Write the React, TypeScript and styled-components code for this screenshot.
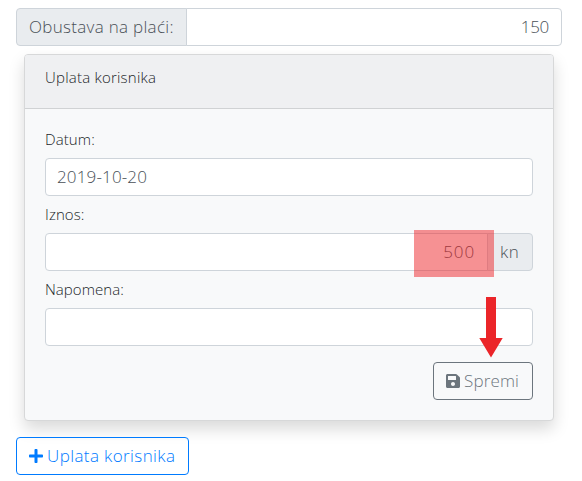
import React from "react";
import styled, { createGlobalStyle } from "styled-components";
import { FaPlus, FaSave } from "react-icons/fa";

const GlobalStyle = createGlobalStyle`
  *, *::before, *::after { box-sizing: border-box; }
  body {
    margin: 0;
    background: #fff;
    color: #212529;
    font-family: "Open Sans", "Noto Sans", sans-serif;
    font-weight: 340;
    font-size: 17px;
    line-height: 24px;
  }
`;

const Page = styled.main`
  padding: 8px 20px 6px 16px;
  height: 481px;
  overflow: hidden;
`;

const InputGroup = styled.div`
  display: flex;
  position: relative;
  height: 38px;
`;

const Addon = styled.span<{ $side: "left" | "right"; $width: number; $tracking?: number }>`
  flex: none;
  width: ${(p) => p.$width}px;
  padding: 6px 0 6px 12px;
  white-space: nowrap;
  color: #495057;
  background: #e9ecef;
  border: 1px solid #ced4da;
  letter-spacing: ${(p) => p.$tracking ?? 0}px;
  border-radius: ${(p) => (p.$side === "left" ? "4px 0 0 4px" : "0 4px 4px 0")};
  ${(p) => (p.$side === "left" ? "margin-right: -1px;" : "margin-left: -1px;")}
`;

const Input = styled.input<{ $join?: "left" | "right"; $end?: boolean; $tracking?: number }>`
  display: block;
  flex: 1;
  min-width: 0;
  width: 100%;
  height: 38px;
  padding: 5px 12px 7px 11px;
  font: inherit;
  letter-spacing: ${(p) => p.$tracking ?? 0}px;
  color: #495057;
  text-align: ${(p) => (p.$end ? "right" : "left")};
  background: #fff;
  border: 1px solid #ced4da;
  border-radius: ${(p) =>
    p.$join === "left" ? "0 4px 4px 0" : p.$join === "right" ? "4px 0 0 4px" : "4px"};
  outline: none;
`;

const Card = styled.section`
  margin: 8px 8px 16px;
  height: 367px;
  background: #f8f9fa;
  border: 1px solid #d7d8d9;
  border-radius: 4px;
  box-shadow: 0 8px 16px rgba(0, 0, 0, 0.15);
`;

const CardHeader = styled.header`
  height: 54px;
  padding: 10px 20px;
  background: #eff0f2;
  border-bottom: 1px solid #d0d2d4;
  border-radius: 3px 3px 0 0;
  font-size: 15px;
  letter-spacing: 0.22px;
`;

const CardBody = styled.div`
  padding: 20px;
`;

const Label = styled.label<{ $tracking?: number }>`
  display: block;
  height: 29px;
  line-height: 20px;
  font-size: 15px;
  letter-spacing: ${(p) => p.$tracking ?? 0}px;
`;

const Field = styled.div`
  margin-bottom: 8px;
`;

const Actions = styled.div`
  display: flex;
  justify-content: flex-end;
  margin-top: 16px;
`;

const Button = styled.button<{ $color: string; $width: number; $tracking?: number }>`
  display: flex;
  align-items: center;
  gap: 4px;
  width: ${(p) => p.$width}px;
  height: 38px;
  padding: 0 12px;
  font: inherit;
  letter-spacing: ${(p) => p.$tracking ?? 0}px;
  white-space: nowrap;
  color: ${(p) => p.$color};
  background: transparent;
  border: 1px solid ${(p) => p.$color};
  border-radius: 4px;

  svg {
    flex: none;
    width: 14px;
    height: 16px;
  }
`;

const Highlight = styled.div`
  position: absolute;
  top: -3px;
  right: 39px;
  width: 80px;
  height: 47px;
  background: rgba(237, 36, 40, 0.5);
`;

const Arrow = styled.svg`
  position: absolute;
  top: 64px;
  right: 29px;
  width: 25px;
  height: 61px;
`;

export default function App() {
  return (
    <>
      <GlobalStyle />
      <Page>
        <InputGroup>
          <Addon $side="left" $width={171} $tracking={0.3}>Obustava na plaći:</Addon>
          <Input $join="left" $end $tracking={-0.3} aria-label="Obustava na plaći" defaultValue="150" />
        </InputGroup>
        <Card>
          <CardHeader>Uplata korisnika</CardHeader>
          <CardBody>
            <Field>
              <Label htmlFor="datum" $tracking={0.1}>Datum:</Label>
              <Input id="datum" $tracking={0.15} defaultValue="2019-10-20" />
            </Field>
            <Field>
              <Label htmlFor="iznos" $tracking={0.1}>Iznos:</Label>
              <InputGroup>
                <Input id="iznos" $join="right" $end $tracking={0.9} defaultValue="500" />
                <Addon $side="right" $width={46} $tracking={0.5}>kn</Addon>
                <Highlight />
                <Arrow viewBox="0 0 25 61">
                  <path d="M7 0h10v41h6.700L12 60.500.300 41H7z" fill="#eb2529" />
                </Arrow>
              </InputGroup>
            </Field>
            <Field>
              <Label htmlFor="napomena" $tracking={0.05}>Napomena:</Label>
              <Input id="napomena" />
            </Field>
            <Actions>
              <Button $color="#6c757d" $width={100} $tracking={0.15}><FaSave />Spremi</Button>
            </Actions>
          </CardBody>
        </Card>
        <Button $color="#007bff" $width={173} $tracking={0.4}><FaPlus />Uplata korisnika</Button>
      </Page>
    </>
  );
}
